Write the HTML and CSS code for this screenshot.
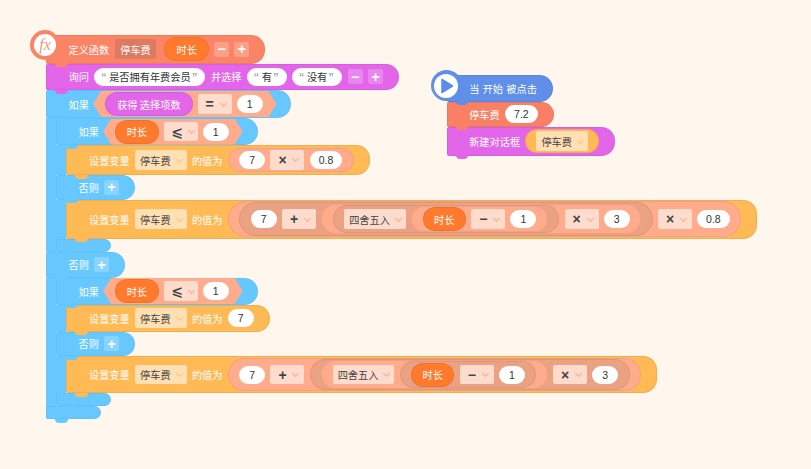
FILE: index.html
```html
<!DOCTYPE html>
<html lang="zh-CN">
<head>
    <meta charset="UTF-8">
    <meta name="viewport" content="width=device-width, initial-scale=1.0">
    <title>停车费</title>
    <link rel="stylesheet" href="styles.css">
</head>
<body>
    <div class="canvas">
        <div class="script script-main">
            <div class="block define">
                <div class="hat-icon fx-icon"><span class="fx-badge">fx</span></div>
                <span>定义函数</span>
                <span class="fn-name">停车费</span>
                <span class="var">时长</span>
                <span class="btn">−</span>
                <span class="btn">+</span>
            </div>
            <div class="block ask">
                <span>询问</span>
                <span class="value str"><i>“</i>是否拥有年费会员<i>”</i></span>
                <span>并选择</span>
                <span class="value str"><i>“</i>有<i>”</i></span>
                <span class="value str"><i>“</i>没有<i>”</i></span>
                <span class="btn">−</span>
                <span class="btn">+</span>
            </div>
            <div class="c">
                <div class="block ctrl if-top">
                    <span>如果</span>
                    <div class="cond">
                        <span class="var var-pink">获得 选择项数</span>
                        <span class="drop op">=<b class="arrow"></b></span>
                        <span class="value">1</span>
                    </div>
                </div>
                <div class="c-body">
                    <div class="c">
                        <div class="block ctrl if-row">
                            <span>如果</span>
                            <div class="cond">
                                <span class="var">时长</span>
                                <span class="drop op">⩽<b class="arrow"></b></span>
                                <span class="value">1</span>
                            </div>
                        </div>
                        <div class="c-body">
                            <div class="block set set-m">
                                <span>设置变量</span>
                                <span class="drop">停车费<b class="arrow"></b></span>
                                <span>的值为</span>
                                <div class="expr">
                                    <span class="value">7</span>
                                    <span class="drop op">×<b class="arrow"></b></span>
                                    <span class="value">0.8</span>
                                </div>
                            </div>
                        </div>
                        <div class="block ctrl else-row">
                            <span>否则</span>
                            <span class="btn">+</span>
                        </div>
                        <div class="c-body">
                            <div class="block set set-l">
                                <span>设置变量</span>
                                <span class="drop">停车费<b class="arrow"></b></span>
                                <span>的值为</span>
                                <div class="expr">
                                    <div class="expr dark">
                                        <span class="value">7</span>
                                        <span class="drop op">+<b class="arrow"></b></span>
                                        <div class="expr">
                                            <div class="expr dark">
                                                <span class="drop">四舍五入<b class="arrow"></b></span>
                                                <div class="expr">
                                                    <span class="var">时长</span>
                                                    <span class="drop op">−<b class="arrow"></b></span>
                                                    <span class="value">1</span>
                                                </div>
                                            </div>
                                            <span class="drop op">×<b class="arrow"></b></span>
                                            <span class="value">3</span>
                                        </div>
                                    </div>
                                    <span class="drop op">×<b class="arrow"></b></span>
                                    <span class="value">0.8</span>
                                </div>
                            </div>
                        </div>
                        <div class="block ctrl close"></div>
                    </div>
                </div>
                <div class="block ctrl else-top">
                    <span>否则</span>
                    <span class="btn">+</span>
                </div>
                <div class="c-body">
                    <div class="c">
                        <div class="block ctrl if-row">
                            <span>如果</span>
                            <div class="cond">
                                <span class="var">时长</span>
                                <span class="drop op">⩽<b class="arrow"></b></span>
                                <span class="value">1</span>
                            </div>
                        </div>
                        <div class="c-body">
                            <div class="block set">
                                <span>设置变量</span>
                                <span class="drop">停车费<b class="arrow"></b></span>
                                <span>的值为</span>
                                <span class="value">7</span>
                            </div>
                        </div>
                        <div class="block ctrl else-row">
                            <span>否则</span>
                            <span class="btn">+</span>
                        </div>
                        <div class="c-body">
                            <div class="block set set-xl">
                                <span>设置变量</span>
                                <span class="drop">停车费<b class="arrow"></b></span>
                                <span>的值为</span>
                                <div class="expr">
                                    <span class="value">7</span>
                                    <span class="drop op">+<b class="arrow"></b></span>
                                    <div class="expr dark">
                                        <div class="expr">
                                            <span class="drop">四舍五入<b class="arrow"></b></span>
                                            <div class="expr dark">
                                                <span class="var">时长</span>
                                                <span class="drop op">−<b class="arrow"></b></span>
                                                <span class="value">1</span>
                                            </div>
                                        </div>
                                        <span class="drop op">×<b class="arrow"></b></span>
                                        <span class="value">3</span>
                                    </div>
                                </div>
                            </div>
                        </div>
                        <div class="block ctrl close"></div>
                    </div>
                </div>
                <div class="block ctrl close"></div>
            </div>
        </div>

        <div class="script script-side">
            <div class="block start">
                <div class="hat-icon play-icon">
                    <svg width="24" height="24" viewBox="0 0 24 24">
                        <circle cx="12" cy="12" r="12" fill="#fff"/>
                        <path d="M8 5.5 L18.5 12 L8 18.5 Z" fill="#5b8ce8" stroke="#5b8ce8" stroke-width="1.5" stroke-linejoin="round"/>
                    </svg>
                </div>
                <span>当 开始 被点击</span>
            </div>
            <div class="block fn-call">
                <span>停车费</span>
                <span class="value">7.2</span>
            </div>
            <div class="block dialog">
                <span>新建对话框</span>
                <div class="var-box">
                    <span class="drop">停车费<b class="arrow"></b></span>
                </div>
            </div>
        </div>
    </div>
</body>
</html>
```

FILE: styles.css
```css
body {
    margin: 0;
    background-color: #fff7ee;
    font-family: "Noto Sans CJK SC", "Liberation Sans", sans-serif;
    font-size: 10.2px;
    overflow: hidden;
}
.canvas {
    position: relative;
    width: 811px;
    height: 469px;
}
.script {
    position: absolute;
    display: flex;
    flex-direction: column;
    align-items: flex-start;
}
.script-main {
    left: 46px;
    top: 35px;
}
.script-side {
    left: 446.7px;
    top: 75px;
}

/* blocks */
.block {
    position: relative;
    display: flex;
    align-items: center;
    gap: 5.3px;
    box-sizing: border-box;
    height: 27px;
    padding: 0 16px 0 22.5px;
    border-radius: 2px 14px 14px 2px;
    color: #fff;
    white-space: nowrap;
    background-color: var(--block);
    box-shadow: inset 0 0 0 1px rgba(0, 0, 0, 0.06);
}
.block::after {
    content: "";
    position: absolute;
    z-index: 2;
    left: 9px;
    bottom: -3.5px;
    width: 12.5px;
    height: 4px;
    border-radius: 0 0 6px 6px;
    background-color: var(--block);
}
.define {
    --block: #fb8467;
    height: 28.5px;
}
.define .var {
    margin-left: 2.7px;
    padding: 0 12px;
}
.ask {
    --block: #e365e9;
    height: 26.5px;
    gap: 5.6px;
}
.ctrl {
    --block: #66c8ff;
    box-shadow: inset 0 0 0 1px rgba(0, 0, 0, 0.03);
}
.set {
    --block: #ffb955;
    padding-left: 23px;
}
.start {
    --block: #5f8fe9;
    height: 26.7px;
    word-spacing: 1px;
}
.fn-call {
    --block: #f98064;
    height: 25px;
    padding-right: 16.5px;
}
.dialog {
    --block: #e365e9;
    height: 29px;
    padding-right: 16.5px;
}
.if-top {
    height: 28px;
    padding-right: 14px;
}
.if-row {
    padding-right: 15px;
}
.else-row {
    height: 24.5px;
}
.else-top {
    height: 26px;
}
.set-m {
    height: 30px;
}
.set-l {
    height: 39px;
}
.set-xl {
    height: 37px;
}
.close {
    width: 55px;
    height: 13px;
    padding: 0;
    border-radius: 0 7px 7px 2px;
}

/* c shaped blocks */
.c {
    display: flex;
    flex-direction: column;
    align-items: flex-start;
}
.c-body {
    display: flex;
    flex-direction: column;
    align-items: flex-start;
    border-left: 10px solid #66c8ff;
}

/* hat icons */
.hat-icon {
    position: absolute;
    z-index: 3;
    display: flex;
    align-items: center;
    justify-content: center;
    box-sizing: border-box;
    border-radius: 50%;
}
.fx-icon {
    left: -16px;
    top: -5px;
    width: 30px;
    height: 30px;
    background-color: #fb8467;
}
.fx-badge {
    display: flex;
    align-items: center;
    justify-content: center;
    width: 22px;
    height: 22px;
    border-radius: 50%;
    background-color: #fff;
    color: #fb9478;
    font-family: "Liberation Serif", serif;
    font-size: 16px;
    font-style: italic;
}
.play-icon {
    left: -16px;
    top: -5px;
    width: 31px;
    height: 31px;
    background-color: #5f8fe9;
}

/* fields */
.fn-name {
    display: flex;
    align-items: center;
    height: 20px;
    padding: 0 5.7px;
    border-radius: 2px;
    background-color: #dd7b62;
}
.var {
    display: flex;
    align-items: center;
    justify-content: center;
    box-sizing: border-box;
    height: 24px;
    padding: 0 11.5px;
    border-radius: 12px;
    background-color: #ff7a2c;
    box-shadow: inset 0 0 0 1px rgba(0, 0, 0, 0.06);
}
.var-pink {
    background-color: #e365e9;
    padding: 0 12px;
}
.btn {
    display: flex;
    align-items: center;
    justify-content: center;
    width: 15px;
    height: 15px;
    border-radius: 2px;
    background-color: rgba(255, 255, 255, 0.22);
    font-family: "Liberation Sans", sans-serif;
    font-size: 14px;
    font-weight: bold;
}
.value {
    display: flex;
    align-items: center;
    justify-content: center;
    box-sizing: border-box;
    min-width: 26px;
    height: 18px;
    padding: 0 9px;
    border-radius: 9px;
    background-color: #fff;
    color: #333;
    font-family: "Liberation Sans", sans-serif;
    font-size: 10.5px;
}
.str {
    padding: 0;
    font-family: "Noto Sans CJK SC", sans-serif;
    font-size: 10.2px;
}
.str i {
    box-sizing: border-box;
    width: 14.7px;
    padding: 3px 1.5px 0 7px;
    color: #999;
    font-style: normal;
    font-family: "Liberation Sans", sans-serif;
    font-size: 14px;
    line-height: 10px;
}
.str i:last-child {
    padding: 3px 7px 0 1.5px;
}
.drop {
    display: flex;
    align-items: center;
    box-sizing: border-box;
    height: 19.5px;
    padding: 0 4px 0 5px;
    border-radius: 2px;
    color: #444;
    background-color: #ffdfb3;
}
.expr .drop,
.cond .drop {
    background-color: #fedccd;
}
.op {
    justify-content: space-between;
    width: 34px;
    padding: 0 5px 0 8px;
    font-family: "Liberation Sans", "DejaVu Sans", sans-serif;
    font-size: 14px;
    font-weight: bold;
}
.arrow {
    flex: none;
    width: 4px;
    height: 4px;
    margin: -2px 1px 0 6px;
    border-right: 1.2px solid #ffab8c;
    border-bottom: 1.2px solid #ffab8c;
    transform: rotate(45deg);
}
.set > .drop .arrow,
.var-box .arrow {
    border-color: #ffc680;
}
.cond {
    display: flex;
    align-items: center;
    gap: 5px;
    height: 26px;
    margin-left: -1px;
    padding: 0 14px 0 12px;
    background-color: #ffab8c;
    clip-path: polygon(0 50%, 8px 0, calc(100% - 8px) 0, 100% 50%, calc(100% - 8px) 100%, 8px 100%);
}
.expr {
    display: flex;
    align-items: center;
    gap: 5.2px;
    box-sizing: border-box;
    min-height: 23.4px;
    padding: 1.15px 11.5px;
    border-radius: 18px;
    background-color: #ffab8c;
    box-shadow: inset 0 0 0 1px rgba(0, 0, 0, 0.06);
}
.dark {
    background-color: #eaa283;
}
.var-box {
    display: flex;
    align-items: center;
    height: 24px;
    padding: 0 11px;
    border-radius: 12px;
    background-color: #ffb955;
    box-shadow: inset 0 0 0 1px rgba(0, 0, 0, 0.06);
}
```
